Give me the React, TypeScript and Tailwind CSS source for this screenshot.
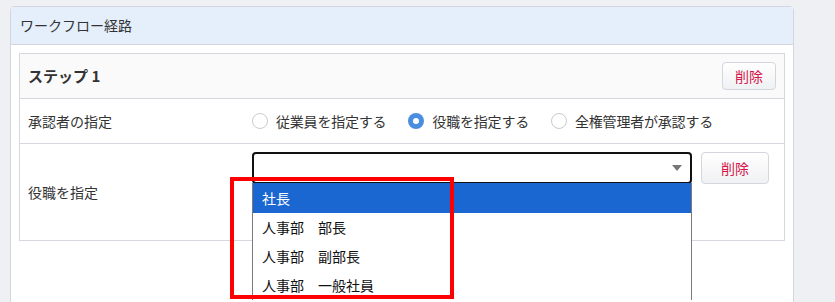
import React from "react";

const font = { fontFamily: '"Noto Sans CJK JP", "Noto Sans", sans-serif' };

function Radio({ checked, label }: { checked?: boolean; label: string }) {
  return (
    <label className="mr-[22px] flex items-center gap-2">
      {checked ? (
        <span className="flex h-[16px] w-[16px] items-center justify-center rounded-full bg-[#4a8ee0]">
          <span className="h-[6px] w-[6px] rounded-full bg-white" />
        </span>
      ) : (
        <span className="h-[16px] w-[16px] rounded-full border border-[#c9cbd0] bg-white" />
      )}
      <span className="text-[14px] tracking-[-0.2px] text-[#333]">{label}</span>
    </label>
  );
}

function DeleteButton({ className = "" }: { className?: string }) {
  return (
    <button
      className={`flex items-center justify-center rounded-[4px] border border-[#d3d6dc] bg-gradient-to-b from-white to-[#f0f1f3] text-[14px] text-[#d4164b] ${className}`}
    >
      削除
    </button>
  );
}

const options = ["社長", "人事部　部長", "人事部　副部長", "人事部　一般社員"];

export default function App() {
  return (
    <div className="relative h-[302px] overflow-hidden bg-[#eff0f4] pl-[10px] pr-[41px] pt-[6px]" style={font}>
      <div className="h-[310px] rounded-t-[4px] border border-[#d3d6dc] bg-white">
        <div className="flex h-[38px] items-center border-b border-[#d3d6dc] bg-[#e5effb] px-[9px] text-[14px] text-[#333]">
          ワークフロー経路
        </div>
        <div className="p-2">
          <div className="border border-[#d5d8de]">
            <div className="flex h-[45px] items-center justify-between border-b border-[#d5d8de] bg-[#fafafa] px-2">
              <span className="text-[15px] font-bold text-[#333]">ステップ 1</span>
              <DeleteButton className="h-[28px] w-[54px]" />
            </div>
            <div className="flex h-[45px] items-center border-b border-[#d5d8de]">
              <div className="w-[232px] px-2 text-[14px] text-[#333]">承認者の指定</div>
              <div className="flex items-center">
                <Radio label="従業員を指定する" />
                <Radio checked label="役職を指定する" />
                <Radio label="全権管理者が承認する" />
              </div>
            </div>
            <div className="flex h-[96px]">
              <div className="flex w-[232px] items-center px-2 text-[14px] text-[#333]">役職を指定</div>
              <div className="flex items-start pt-2">
                <div className="relative">
                  <div className="flex h-[32px] w-[440px] items-center justify-end rounded-[4px] border-2 border-[#111] bg-white pr-[8px]">
                    <svg width="10" height="6" viewBox="0 0 10 6">
                      <path d="M0 0h10L5 6z" fill="#777" />
                    </svg>
                  </div>
                  <div className="absolute left-0 top-[31px] z-10 w-[440px] border-x border-[#7a7a7a] bg-white">
                    {options.map((o, i) => (
                      <div
                        key={o}
                        className={`flex items-center pl-[9px] text-[14px] ${
                          i === 0 ? "h-[30px] bg-[#1b67d1] text-white" : "h-[29px] text-[#111]"
                        }`}
                      >
                        {o}
                      </div>
                    ))}
                  </div>
                </div>
                <DeleteButton className="ml-[9px] h-[32px] w-[68px]" />
              </div>
            </div>
          </div>
        </div>
      </div>
      <div className="absolute left-[230px] top-[177px] z-20 h-[122px] w-[224px] border-4 border-[#ff0000]" />
    </div>
  );
}
